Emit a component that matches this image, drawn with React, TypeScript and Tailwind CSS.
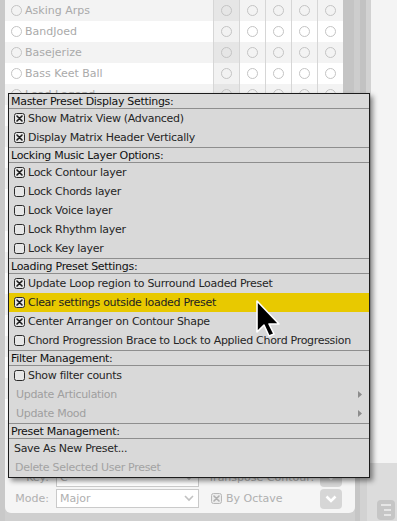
import React from "react";

// only the first rows show a name; the rest sit behind the popup menu
const names = ["Asking Arps", "BandJoed", "Basejerize", "Bass Keet Ball", "Lead Legend"];
const rows = Array.from({ length: 21 }, (_, i) => names[i] ?? "");

const Radio = () => (
  <span className="block h-[11px] w-[11px] shrink-0 rounded-full border-[1.5px] border-[#c4c4c4]" />
);

const Check = ({ on, light }: { on?: boolean; light?: boolean }) => (
  <svg width="11" height="11" viewBox="0 0 11 11" className="shrink-0">
    <rect
      x="0.5"
      y="0.5"
      width="10"
      height="10"
      rx="2"
      fill={light ? "#ececec" : "#e6e6e6"}
      stroke={light ? "#b8b8b8" : "#2a2a2a"}
    />
    {on && (
      <path
        d="M3 3 L8 8 M8 3 L3 8"
        stroke={light ? "#b0b0b0" : "#1a1a1a"}
        strokeWidth="1.6"
        strokeLinecap="round"
      />
    )}
  </svg>
);

const Header = ({ label, first }: { label: string; first?: boolean }) => (
  <div
    className={
      first
        ? "flex h-[15px] items-center border-b border-[#8e8e8e] pl-[2px] text-[#111]"
        : "flex h-[16px] items-center border-y border-[#8e8e8e] pl-[2px] text-[#111]"
    }
  >
    {label}
  </div>
);

const Item = ({ label, on, active }: { label: string; on?: boolean; active?: boolean }) => (
  <div
    className={
      active
        ? "flex h-[19px] items-center gap-[3px] bg-[#e8c900] pl-[5px] text-[#222]"
        : "flex h-[19px] items-center gap-[3px] pl-[5px] text-[#262626]"
    }
  >
    <Check on={on} />
    <span>{label}</span>
  </div>
);

const SubItem = ({ label }: { label: string }) => (
  <div className="flex h-[19px] items-center justify-between pl-[7px] pr-[7px] text-[#9f9f9f]">
    <span>{label}</span>
    <svg width="4" height="7" viewBox="0 0 4 7">
      <path d="M0 0 L4 3.5 L0 7 Z" fill="#8c8c8c" />
    </svg>
  </div>
);

const Chevron = ({ color }: { color: string }) => (
  <svg width="10" height="7" viewBox="0 0 10 7">
    <path d="M1 1 L5 5 L9 1" fill="none" stroke={color} strokeWidth="1.6" />
  </svg>
);

export default function App() {
  return (
    <div className="relative h-[521px] w-[397px] overflow-hidden bg-[#f4f4f4] font-['DejaVu_Sans',sans-serif] text-[11px] leading-none">
      {/* preset list */}
      <div className="flex h-[440px]">
        <div className="w-[5px] bg-[#c9c9c9]" />
        <div className="w-[338px] overflow-hidden">
          {rows.map((n, i) => (
            <div
              key={i}
              className={i % 2 === 0 ? "flex h-[21px] bg-[#f3f3f3]" : "flex h-[21px] bg-white"}
            >
              <div className="flex w-[208px] items-center gap-[3px] pl-[6px] text-[#aaaaaa]">
                <Radio />
                {n && <span>{n}</span>}
              </div>
              {[0, 1, 2, 3, 4].map((c) => (
                <div
                  key={c}
                  className={
                    c === 0
                      ? "flex w-[26px] items-center justify-center border-l border-[#d6d6d6] bg-black/[0.05]"
                      : "flex w-[26px] items-center justify-center border-l border-[#d6d6d6]"
                  }
                >
                  <Radio />
                </div>
              ))}
            </div>
          ))}
        </div>
        <div className="w-[11px] bg-[#c4c4c4]" />
        <div className="w-[6px] bg-[#cdcdcd]" />
        <div className="w-[6px] bg-[#c2c2c2]" />
        <div className="w-[5px] bg-[#d2d2d2]" />
        <div className="flex-1 bg-[#f4f4f4]" />
      </div>

      {/* bottom settings panel */}
      <div className="flex h-[81px]">
        <div className="w-[5px] bg-[#c9c9c9]" />
        <div className="w-[350px] bg-[#cfcfcf]">
          <div className="h-[73px] rounded-b-[6px] bg-[#f5f5f5] pt-[27px] text-[#b0b0b0]">
            <div className="flex h-[20px] items-center">
              <span className="w-[44px] text-right">Key:</span>
              <div className="ml-[7px] flex h-[19px] w-[143px] items-center justify-between border border-[#cacaca] bg-white pl-[3px] pr-[4px]">
                <span>C</span>
                <Chevron color="#c2c2c2" />
              </div>
              <span className="ml-[9px]">Transpose Contour:</span>
              <div className="ml-auto mr-[13px] flex h-[19px] w-[22px] items-center justify-center rounded-[4px] bg-[#d6d6d6]">
                <Chevron color="#ffffff" />
              </div>
            </div>
            <div className="mt-[2px] flex h-[19px] items-center">
              <span className="w-[44px] text-right">Mode:</span>
              <div className="ml-[7px] flex h-[19px] w-[143px] items-center justify-between border border-[#cacaca] bg-white pl-[3px] pr-[4px]">
                <span>Major</span>
                <Chevron color="#c2c2c2" />
              </div>
              <span className="ml-[12px] flex items-center gap-[4px]">
                <Check on light />
                By Octave
              </span>
              <div className="ml-auto mr-[13px] flex h-[20px] w-[22px] items-center justify-center rounded-[4px] bg-[#d6d6d6]">
                <svg width="12" height="8" viewBox="0 0 12 8">
                  <path d="M1.5 1.5 L6 6 L10.5 1.5" fill="none" stroke="#fff" strokeWidth="2.6" />
                </svg>
              </div>
            </div>
          </div>
        </div>
        <div className="w-[5px] bg-[#c6c6c6]" />
        <div className="w-[7px] bg-[#d2d2d2]" />
        <div className="flex flex-1 flex-col">
          <div className="h-[23px] bg-[#f4f4f4]" />
          <div className="flex-1 bg-[#dcdcdc] pl-[10px] pt-[37px]">
            <svg width="18" height="20" viewBox="0 0 18 20">
              <rect x="0" y="0" width="18" height="20" rx="4" fill="#c6c6c6" />
              <path d="M4 5 H14 M7 10 H14 M7 15 H14" stroke="#e6e6e6" strokeWidth="2.2" />
            </svg>
          </div>
        </div>
      </div>

      {/* popup menu */}
      <div className="absolute left-[8px] top-[93px] w-[362px] border border-[#1c1c1c] bg-[#d9d9d9] tracking-[-0.3px] shadow-[3px_3px_5px_rgba(0,0,0,0.45)]">
        <Header label="Master Preset Display Settings:" first />
        <Item label="Show Matrix View (Advanced)" on />
        <Item label="Display Matrix Header Vertically" on />
        <Header label="Locking Music Layer Options:" />
        <Item label="Lock Contour layer" on />
        <Item label="Lock Chords layer" />
        <Item label="Lock Voice layer" />
        <Item label="Lock Rhythm layer" />
        <Item label="Lock Key layer" />
        <Header label="Loading Preset Settings:" />
        <Item label="Update Loop region to Surround Loaded Preset" on />
        <Item label="Clear settings outside loaded Preset" on active />
        <Item label="Center Arranger on Contour Shape" on />
        <Item label="Chord Progression Brace to Lock to Applied Chord Progression" />
        <Header label="Filter Management:" />
        <Item label="Show filter counts" />
        <SubItem label="Update Articulation" />
        <SubItem label="Update Mood" />
        <Header label="Preset Management:" />
        <div className="flex h-[19px] items-center pl-[5px] text-[#262626]">Save As New Preset...</div>
        <div className="flex h-[19px] items-center pl-[6px] text-[#a3a3a3]">Delete Selected User Preset</div>
      </div>

      {/* mouse pointer */}
      <svg
        className="absolute left-[255px] top-[299px]"
        width="28"
        height="42"
        viewBox="0 0 28 42"
      >
        <path
          d="M2 2 L2 33 L9 26 L14 37 L19 35 L14 25 L24 25 Z"
          fill="#000"
          stroke="#fff"
          strokeWidth="1.6"
          strokeLinejoin="round"
        />
      </svg>
    </div>
  );
}
